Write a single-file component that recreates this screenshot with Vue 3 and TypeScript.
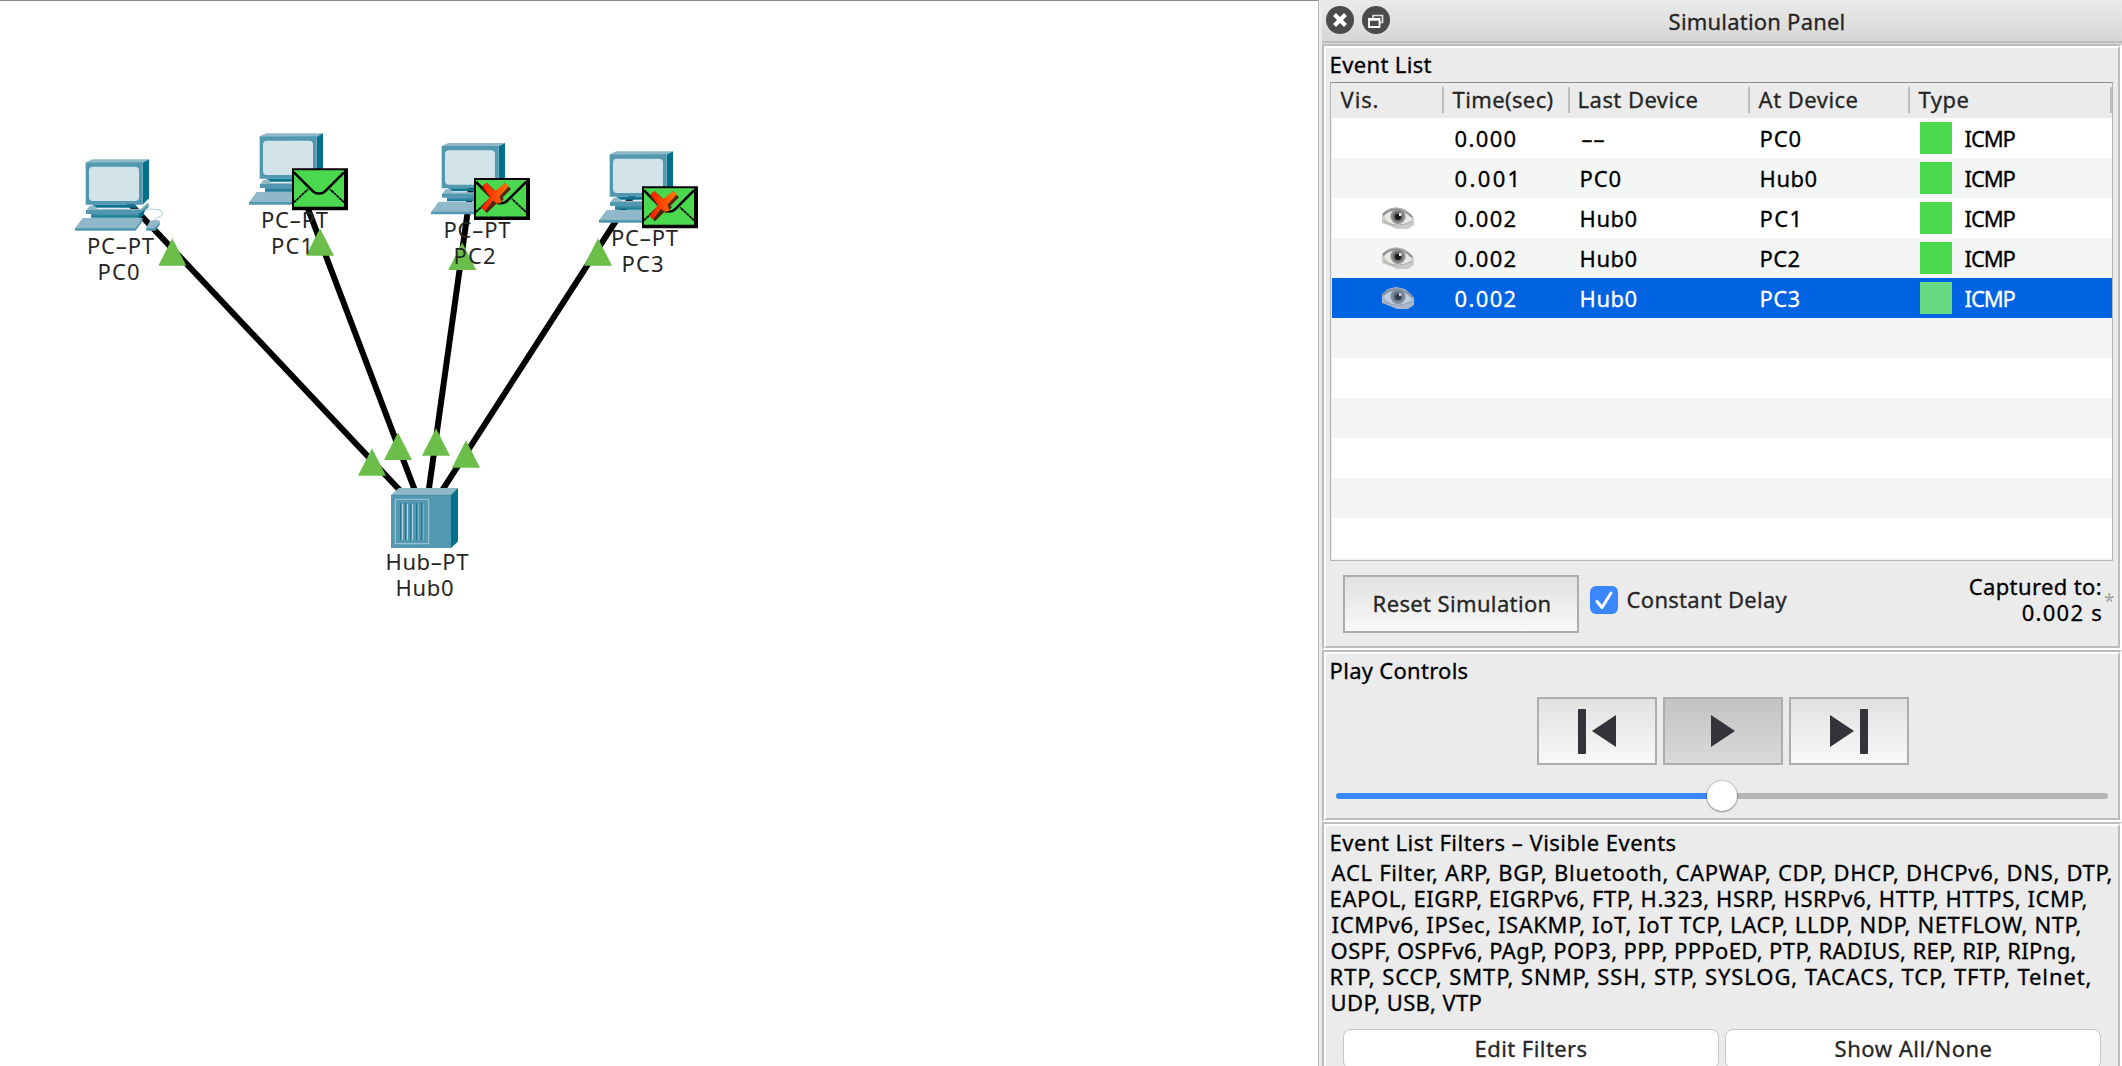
<script setup lang="ts">
import type { Directive } from 'vue'

interface EventRow {
  visible: boolean
  time: string
  last: string
  lastWidth: number
  at: string
  atWidth: number
  selected?: boolean
}

interface Pc {
  name: string
  x: number
  y: number
  typeX: number
  typeY: number
  nameX: number
  packet?: 'ok' | 'dropped'
}

const FONT = '22px "Noto Sans"'

/* Sets tracking so that a label's ink spans the given number of pixels and starts at its box edge. */
const vFit: Directive<HTMLElement, number> = {
  mounted(el, binding) {
    const ctx = document.createElement('canvas').getContext('2d')
    const text = (el.textContent ?? '').trim()
    if (!ctx || text.length < 2) return
    ctx.font = FONT
    const m = ctx.measureText(text)
    const ink = m.actualBoundingBoxRight + m.actualBoundingBoxLeft
    el.style.letterSpacing = `${(binding.value - ink) / (text.length - 1)}px`
    el.style.marginLeft = `${m.actualBoundingBoxLeft + 0.6}px`
  },
}

const columns = [
  { label: 'Vis.', cls: 'c-vis', width: 37 },
  { label: 'Time(sec)', cls: 'c-time', width: 100 },
  { label: 'Last Device', cls: 'c-last', width: 118 },
  { label: 'At Device', cls: 'c-at', width: 99 },
  { label: 'Type', cls: 'c-type', width: 50 },
]

const events: EventRow[] = [
  { visible: false, time: '0.000', last: '––', lastWidth: 23, at: 'PC0', atWidth: 39 },
  { visible: false, time: '0.001', last: 'PC0', lastWidth: 39, at: 'Hub0', atWidth: 55 },
  { visible: true, time: '0.002', last: 'Hub0', lastWidth: 55, at: 'PC1', atWidth: 36 },
  { visible: true, time: '0.002', last: 'Hub0', lastWidth: 55, at: 'PC2', atWidth: 38 },
  { visible: true, time: '0.002', last: 'Hub0', lastWidth: 55, at: 'PC3', atWidth: 38, selected: true },
]

const filterLines = [
  { text: 'ACL Filter, ARP, BGP, Bluetooth, CAPWAP, CDP, DHCP, DHCPv6, DNS, DTP,', width: 780 },
  { text: 'EAPOL, EIGRP, EIGRPv6, FTP, H.323, HSRP, HSRPv6, HTTP, HTTPS, ICMP,', width: 755 },
  { text: 'ICMPv6, IPSec, ISAKMP, IoT, IoT TCP, LACP, LLDP, NDP, NETFLOW, NTP,', width: 749 },
  { text: 'OSPF, OSPFv6, PAgP, POP3, PPP, PPPoED, PTP, RADIUS, REP, RIP, RIPng,', width: 744 },
  { text: 'RTP, SCCP, SMTP, SNMP, SSH, STP, SYSLOG, TACACS, TCP, TFTP, Telnet,', width: 759 },
  { text: 'UDP, USB, VTP', width: 150 },
]

const pcs: Pc[] = [
  { name: 'PC0', x: 75, y: 159, typeX: 87, typeY: 253.5, nameX: 97.5 },
  { name: 'PC1', x: 249, y: 133, typeX: 261, typeY: 227.5, nameX: 271, packet: 'ok' },
  { name: 'PC2', x: 431, y: 142.7, typeX: 443.5, typeY: 237.5, nameX: 453.5, packet: 'dropped' },
  { name: 'PC3', x: 599, y: 151, typeX: 611, typeY: 245.5, nameX: 621.5, packet: 'dropped' },
]

const lights = [
  [172.3, 265.7], [320, 255.7], [462.2, 270], [598, 265.7],
  [372, 475.7], [398, 460], [436, 455.7], [466, 467.7],
]
</script>

<template>
  <div class="app">
    <main class="workspace">
      <svg class="topology" width="1318" height="1065" viewBox="0 1 1318 1065">
        <defs>
          <linearGradient id="crossFill" x1="0" x2="1" y1="0" y2="0">
            <stop offset="0" stop-color="#ff1a00" />
            <stop offset="1" stop-color="#ff7a00" />
          </linearGradient>
          <linearGradient id="baseFill" x1="0" x2="0" y1="0" y2="1">
            <stop offset="0" stop-color="#4f96b0" />
            <stop offset="1" stop-color="#0d7490" />
          </linearGradient>
        </defs>
        <g stroke="#000" stroke-width="6">
          <line v-for="p in pcs" :key="p.name" :x1="p.x + 42" :y1="p.y + 31" x2="425" y2="517" />
        </g>

        <g v-for="p in pcs" :key="p.name" :transform="`translate(${p.x} ${p.y}) scale(.33333)`">
          <path d="M48 178h152l-14 10H60z" fill="#2f8099" />
          <path d="M32 10L52 1h170l-20 11z" fill="#8fb8c9" />
          <path d="M203 11L222 1v117l-19 19z" fill="#00708c" />
          <path d="M32 10h171v127H32z" fill="#5298b0" />
          <rect x="42" y="23" width="150" height="103" rx="12" fill="#d3e3ea" />
          <path d="M52 137h128l10 9H60z" fill="#0d7490" />
          <path d="M44 140h16l6 9h132l22-20v8l-20 18H33z" fill="#8fb8c9" />
          <path d="M33 153h167l21-19v10l-21 21H33z" fill="#5298b0" />
          <path d="M48 164h144v12H48z" fill="url(#baseFill)" />
          <path d="M192 164l18-11-4 14-8 10h-6z" fill="#00708c" />
          <path d="M23 177h180l-22 31H0z" fill="#8fb8c9" />
          <path d="M0 207h181l22-30v9l-21 29H0z" fill="#5298b0" />
          <path d="M213 151c28-2 50 1 50 12 0 14-26 8-24 24" fill="none" stroke="#a9c9d5" stroke-width="3" />
          <path d="M225 186l16-4 13 3-14 23-27-1z" fill="#8fb8c9" />
          <path d="M254 185v13l-13 17h-27l-1-8h27z" fill="#5298b0" />
        </g>

        <g transform="translate(391 488)">
          <path d="M0 7L8 0h59l-7 7z" fill="#8fb8c9" />
          <path d="M60 7l7-7v53.500l-7 6.500z" fill="#00708c" />
          <path d="M0 7h60v53H0z" fill="#5298b0" />
          <path d="M0 7.300h60L67 0" fill="none" stroke="#3f8ca6" stroke-width=".8" />
          <path d="M4.300 11.300h33.400v44.400H4.300z" fill="none" stroke="#a9cbd7" />
          <path d="M9.500 15v37M14.500 15v37M19.700 15v37M25.500 15v37M30.500 15v37" stroke="#1d7590" stroke-width="1" />
          <path d="M11.500 16v36M16.500 16v36M21.500 16v36" stroke="#b5d2dd" stroke-width="1" />
          <path d="M27.500 16v36M32.500 16v36" stroke="#7fb0c2" stroke-width="1" />
        </g>

        <path
          v-for="(l, i) in lights"
          :key="i"
          :d="`M${l[0]} ${l[1] - 27.5}l14 27.500h-28z`"
          fill="#6bbe4a"
        />

        <g class="labels">
          <template v-for="p in pcs" :key="p.name">
            <text :x="p.typeX" :y="p.typeY" textLength="67">PC–PT</text>
            <text :x="p.nameX" :y="p.typeY + 26" textLength="42">{{ p.name }}</text>
          </template>
          <text x="385.500" y="569.500" textLength="83">Hub–PT</text>
          <text x="395.500" y="595.500" textLength="58">Hub0</text>
        </g>

        <template v-for="p in pcs" :key="p.name">
          <g v-if="p.packet" :transform="`translate(${p.x + 43} ${p.y + 35.3})`">
            <path d="M0 0h56v42H0z" />
            <path d="M2 2h50v36.500H2z" fill="#49d84e" />
            <path d="M2 4l19 19c3 3 9 3 12 0L52 4" fill="none" stroke="#000" stroke-width="2.600" />
            <path d="M2 34l14-13M52 34L38 21" fill="none" stroke="#000" stroke-width="1.800" stroke-dasharray="3 .6" />
            <g v-if="p.packet === 'dropped'">
              <path d="M10 32L34 8M10 8l17 16" fill="none" stroke="#52250a" stroke-width="8.500" />
              <path d="M8.500 7.500l4-2.500 8.500 8 10-8 4 3-9.500 10.500 2 6-4.500 1-4-3L11 33l-3.500-3.500L16 19z" fill="url(#crossFill)" />
            </g>
          </g>
        </template>
      </svg>
    </main>

    <aside class="panel">
      <header class="titlebar">
        <svg width="66" height="30" viewBox="0 0 66 30">
          <circle cx="15" cy="15" r="14" fill="#4b4b4b" />
          <path d="M9.500 9.500l11 11M20.500 9.500l-11 11" stroke="#fff" stroke-width="4.200" />
          <circle cx="51" cy="15" r="14" fill="#4b4b4b" />
          <path d="M48 13V10.500h9.500v7H55" fill="none" stroke="#ddd" stroke-width="1.700" />
          <path d="M44 14h10.500v8H44z" fill="#4b4b4b" stroke="#fff" stroke-width="1.800" />
          <path d="M43.500 14.500h11.500" stroke="#fff" stroke-width="2.500" />
        </svg>
        <span v-fit="174" class="t title">Simulation Panel</span>
      </header>

      <section class="group g-events">
        <div class="inner">
          <div class="caption"><span v-fit="100" class="t">Event List</span></div>
          <div class="table">
            <div class="row head">
              <div v-for="c in columns" :key="c.label" :class="['cell', c.cls]">
                <span v-fit="c.width" class="t">{{ c.label }}</span>
              </div>
            </div>
            <div v-for="(e, i) in events" :key="i" :class="['row', { selected: e.selected }]">
              <div class="cell c-vis">
                <svg v-if="e.visible" class="eye" width="32" height="22" viewBox="0 0 32 22">
                  <path d="M0 7L6 2l8-2 9 2 6 5 3 4v7l-6 4H15l-7-3-8-3z" fill="#cbcbc9" />
                  <path d="M2 10c5-8 22-9 28 2-3 7-21 9-28-2z" fill="#e9e9e7" />
                  <path d="M1 8c6-7 20-8 29 2" fill="none" stroke="#8b8b89" stroke-width="2" />
                  <path d="M5 4c6-4 14-3 19 1" fill="none" stroke="#a6a6a4" stroke-width="1.500" />
                  <circle cx="16" cy="9.500" r="7.500" fill="#8f8f8d" />
                  <circle cx="16" cy="9.500" r="5" fill="#626260" />
                  <circle cx="16" cy="10" r="3" fill="#191919" />
                  <path d="M17 6h2.500v3H17z" fill="#e8e8e8" />
                  <path d="M2 14c6 5 18 6 28 0" fill="none" stroke="#b0b0ae" stroke-width="1.200" />
                </svg>
              </div>
              <div class="cell c-time"><span v-fit="60" class="t">{{ e.time }}</span></div>
              <div class="cell c-last"><span v-fit="e.lastWidth" class="t">{{ e.last }}</span></div>
              <div class="cell c-at"><span v-fit="e.atWidth" class="t">{{ e.at }}</span></div>
              <div class="cell c-type"><i class="swatch"></i><span v-fit="51" class="t">ICMP</span></div>
            </div>
            <div v-for="n in 6" :key="'blank' + n" class="row"></div>
            <div class="tail"></div>
          </div>
          <div class="actions">
            <button class="flat reset"><span v-fit="175" class="t">Reset Simulation</span></button>
            <label class="delay">
              <svg width="28" height="28" viewBox="0 0 28 28">
                <rect width="28" height="28" rx="6" fill="#3a87fd" />
                <path d="M7 15.500l5 6L21 7" fill="none" stroke="#fff" stroke-width="3" stroke-linecap="round" stroke-linejoin="round" />
              </svg>
              <span v-fit="160" class="t">Constant Delay</span>
            </label>
            <div class="captured">
              <div><span v-fit="131" class="t">Captured to:</span></div>
              <div class="secs"><span v-fit="78.5" class="t">0.002 s</span></div>
            </div>
            <span class="star">*</span>
          </div>
        </div>
      </section>

      <section class="group g-play">
        <div class="inner">
          <div class="caption"><span v-fit="136" class="t">Play Controls</span></div>
          <div class="transport">
            <button class="flat">
              <svg width="116" height="64" viewBox="0 0 116 64" fill="#333439"><rect x="39" y="10" width="8" height="45" rx="1" /><path d="M53 32l24-16v32z" /></svg>
            </button>
            <button class="flat down">
              <svg width="116" height="64" viewBox="0 0 116 64" fill="#333439"><path d="M70 32L46 16v32z" /></svg>
            </button>
            <button class="flat">
              <svg width="116" height="64" viewBox="0 0 116 64" fill="#333439"><path d="M63 32L39 16v32z" /><rect x="69" y="10" width="8" height="45" rx="1" /></svg>
            </button>
          </div>
          <div class="slider"><div class="done"></div><div class="knob"></div><div class="rest"></div></div>
        </div>
      </section>

      <section class="group g-filters">
        <div class="inner">
          <div class="caption"><span v-fit="344" class="t">Event List Filters – Visible Events</span></div>
          <div class="protocols">
            <div v-for="l in filterLines" :key="l.text"><span v-fit="l.width" class="t">{{ l.text }}</span></div>
          </div>
          <div class="buttons">
            <button class="mac edit"><span v-fit="110" class="t">Edit Filters</span></button>
            <button class="mac show"><span v-fit="156" class="t">Show All/None</span></button>
          </div>
        </div>
      </section>
    </aside>
  </div>
</template>

<style>
body {
  margin: 0;
  overflow: hidden;
}
</style>

<style scoped>
.app {
  display: flex;
  width: 2122px;
  height: 1066px;
  overflow: hidden;
  background: #fff;
  color: #000;
  font: 22px/26px "Noto Sans", sans-serif;
}
.app * {
  box-sizing: border-box;
}
.t {
  display: inline-block;
  white-space: nowrap;
  -webkit-text-stroke: 0.3px currentColor;
}
.workspace {
  width: 1318px;
  border-top: 1px solid #8a8a8a;
}
.topology {
  display: block;
}
.labels {
  fill: #262626;
}
.panel {
  width: 804px;
  padding-left: 3px;
  border-left: 1px solid #b9b9b9;
  background: #ebebeb;
}
.titlebar {
  display: flex;
  height: 44px;
  padding: 5px 0 0 3px;
  border-bottom: 1px solid #d9d9d9;
  box-shadow: inset 0 -2px #bdbdbd;
  background: linear-gradient(#ebebeb, #d5d5d5);
}
.title {
  position: relative;
  left: 278px;
  margin-top: 3px;
  color: #262626;
}
.group {
  border: 2px solid;
  border-color: #bdbdbd #fff #fff #bdbdbd;
}
.inner {
  height: 100%;
  border: 2px solid;
  border-color: #fff #bdbdbd #bdbdbd #fff;
}
.g-events {
  height: 606px;
}
.g-play {
  height: 172px;
}
.g-filters {
  height: 300px;
}
.caption {
  height: 34px;
  padding: 3px 0 0 5px;
}
.table {
  width: 783px;
  height: 479px;
  margin-left: 4px;
  padding-left: 1px;
  border: 1px solid #b4b4b4;
  border-top-color: #8c8c8c;
}
.row {
  display: flex;
  height: 40px;
  background: #fff;
}
.row:nth-child(odd) {
  background: #f4f5f5;
}
.row.head {
  height: 35px;
  padding: 4px 0 5px;
  background: #ebebeb;
  color: #262626;
}
.row.selected {
  background: #0063e1;
  color: #fff;
}
.tail {
  height: 2px;
  background: #f4f5f5;
}
.cell {
  display: flex;
  align-items: center;
}
.head .cell {
  padding-left: 8px;
  padding-bottom: 3px;
  border-right: 2px solid #bdbdbd;
}
.c-vis {
  width: 112px;
  padding-left: 50px;
}
.c-time {
  width: 126px;
  padding-left: 11px;
}
.c-last {
  width: 180px;
  padding-left: 11px;
}
.c-at {
  width: 160px;
  padding-left: 11px;
}
.c-type {
  width: 202px;
  padding-left: 10px;
}
.head .c-last {
  padding-left: 9px;
}
.eye {
  margin-top: -1px;
  filter: blur(0.4px);
}
.selected .eye {
  filter: blur(0.4px) brightness(1.1) contrast(0.75);
  opacity: 0.85;
}
.swatch {
  width: 32px;
  height: 32px;
  margin-right: 12px;
  background: #49d84e;
}
.selected .swatch {
  background: #69d984;
}
.actions {
  display: flex;
  padding: 14px 0 0 17px;
}
button {
  margin: 0;
  color: #262626;
  font: inherit;
}
.flat {
  padding: 0;
  border: 2px solid #adadad;
  background: linear-gradient(#e1e1e1, #f8f8f8);
}
.flat.down {
  background: linear-gradient(#c3c3c3, #d9d9d9);
}
.flat svg {
  display: block;
}
.reset {
  width: 236px;
  height: 58px;
  padding: 0 0 2px 29px;
  text-align: left;
}
.delay {
  display: flex;
  gap: 9px;
  margin: 11px 0 0 11px;
  color: #262626;
}
.captured {
  display: flex;
  flex-direction: column;
  width: 132px;
  margin: -2px 0 0 182px;
}
.secs {
  padding-left: 53px;
}
.star {
  margin: 13px 0 0 3px;
  color: #a2a2a2;
  font-size: 19px;
}
.transport {
  display: flex;
  gap: 6px;
  margin: 9px 0 0 211px;
}
.transport .flat {
  width: 120px;
  height: 68px;
}
.slider {
  display: flex;
  align-items: center;
  height: 32px;
  margin: 15px 0 0 10px;
}
.done {
  width: 373px;
  height: 6px;
  border-radius: 3px 0 0 3px;
  background: #3a87fd;
}
.knob {
  z-index: 1;
  width: 30px;
  height: 30px;
  margin: 0 -2px;
  border-radius: 50%;
  background: #fff;
  box-shadow: 0 0 1px 1px rgba(0, 0, 0, 0.16), 0 1px 2px rgba(0, 0, 0, 0.3);
}
.rest {
  width: 373px;
  height: 6px;
  border-radius: 0 3px 3px 0;
  background: #b6b6b6;
}
.g-filters .caption {
  height: 33px;
}
.protocols {
  padding-left: 5px;
}
.buttons {
  display: flex;
  gap: 6px;
  padding: 14px 0 0 17px;
}
.mac {
  width: 376px;
  height: 40px;
  padding: 0;
  border: 1px solid #c6c6c6;
  border-radius: 8px;
  background: #fff;
  text-align: left;
}
.edit {
  padding: 0 0 2px 132px;
}
.show {
  padding: 0 0 2px 109px;
}
</style>
